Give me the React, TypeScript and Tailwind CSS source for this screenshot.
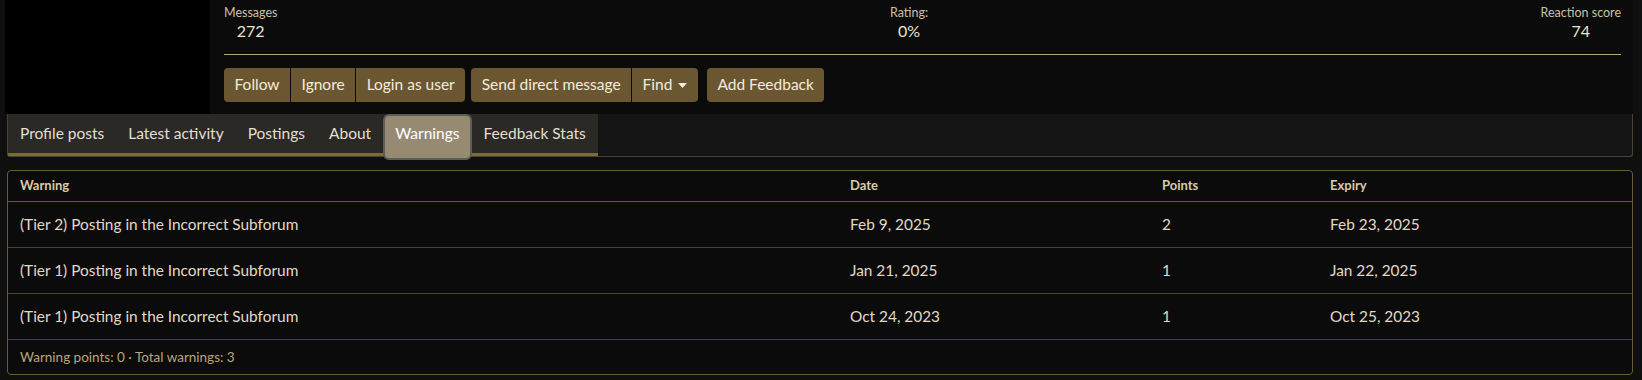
const font = { fontFamily: 'Lato, "Noto Sans", sans-serif' }

const stats = [
  { label: 'Messages', value: '272', align: 'items-start' },
  { label: 'Rating:', value: '0%', align: 'items-center' },
  { label: 'Reaction score', value: '74', align: 'items-end' },
]

const tabs = ['Profile posts', 'Latest activity', 'Postings', 'About', 'Warnings', 'Feedback Stats']

const warnings = [
  { title: '(Tier 2) Posting in the Incorrect Subforum', date: 'Feb 9, 2025', points: '2', expiry: 'Feb 23, 2025' },
  { title: '(Tier 1) Posting in the Incorrect Subforum', date: 'Jan 21, 2025', points: '1', expiry: 'Jan 22, 2025' },
  { title: '(Tier 1) Posting in the Incorrect Subforum', date: 'Oct 24, 2023', points: '1', expiry: 'Oct 25, 2023' },
]

const cols = 'grid grid-cols-[830px_312px_168px_1fr]'

function Btn({ children, className = '' }: { children: React.ReactNode; className?: string }) {
  return (
    <button className={`h-[34px] px-[10.5px] bg-[#6b5632] text-[15.5px] text-[#f3ecdd] flex items-center gap-[6px] ${className}`}>
      {children}
    </button>
  )
}

export default function App() {
  return (
    <div className="min-h-[380px] w-[1642px] bg-[#0f0f0f] pl-[5px] pr-[9px]" style={font}>
      {/* member header */}
      <div className="flex bg-[#0b0b0b] h-[114px]">
        <div className="w-[205px] h-[114px] bg-black flex-shrink-0" />
        <div className="flex-1 pl-[14px] pr-[12px] pt-[5px]">
          <div className="flex justify-between">
            {stats.map((s) => (
              <div key={s.label} className={`flex flex-col ${s.align}`}>
                <div className="flex flex-col items-center">
                  <span className="text-[12.5px] leading-[16px] text-[#c9c0a6]">{s.label}</span>
                  <span className="text-[16px] leading-[20px] text-[#ebe3cf]">{s.value}</span>
                </div>
              </div>
            ))}
          </div>
          <div className="mt-[13px] h-px bg-[#b9a77c]" />
          <div className="mt-[13px] flex gap-[6px]">
            <div className="flex gap-px">
              <Btn className="rounded-l-[4px]">Follow</Btn>
              <Btn>Ignore</Btn>
              <Btn className="rounded-r-[4px]">Login as user</Btn>
            </div>
            <div className="flex gap-px">
              <Btn className="rounded-l-[4px]">Send direct message</Btn>
              <Btn className="rounded-r-[4px]">
                Find
                <svg width="9" height="6" viewBox="0 0 9 6" className="mt-[2px]">
                  <polygon points="0,0 9,0 4.5,5" fill="#f3ecdd" />
                </svg>
              </Btn>
            </div>
            <Btn className="rounded-[4px] ml-[3px]">Add Feedback</Btn>
          </div>
        </div>
      </div>

      {/* tabs */}
      <div className="ml-[2px] h-[43px] bg-[#141414] border-x border-b border-[#4a4230] rounded-b-[3px]">
        <div className="inline-flex h-[42px] bg-[#2a2926] border-b-[3px] border-[#7d6a3a]">
          {tabs.map((t) =>
            t === 'Warnings' ? (
              <div
                key={t}
                className="relative z-10 self-start h-[46px] px-[10px] pb-[7px] flex items-center rounded-[6px] border-2 border-[#5e5c57] bg-[#978a72] text-[15.5px] text-white"
              >
                {t}
              </div>
            ) : (
              <div key={t} className="px-3 flex items-center text-[15.5px] text-[#e3dfd4]">
                {t}
              </div>
            ),
          )}
        </div>
      </div>

      {/* warnings table */}
      <div className="ml-[2px] mt-[13px] border border-[#6b5a32] rounded-[4px] bg-[#0b0b0b]">
        <div className={`${cols} h-[31px] items-center border-b border-[#6b5a33] text-[13px] font-bold text-[#d9cba6]`}>
          <div className="pl-3">Warning</div>
          <div className="pl-3">Date</div>
          <div className="pl-3">Points</div>
          <div className="pl-3">Expiry</div>
        </div>
        {warnings.map((w, i) => (
          <div key={i} className={`${cols} h-[46px] items-center border-b border-[#4d4328] text-[15.4px] text-[#e2d9c5]`}>
            <div className="pl-3">{w.title}</div>
            <div className="pl-3">{w.date}</div>
            <div className="pl-3">{w.points}</div>
            <div className="pl-3">{w.expiry}</div>
          </div>
        ))}
        <div className="h-[34px] flex items-center pl-3 text-[13.5px] text-[#b8a67a]">
          Warning points: 0 · Total warnings: 3
        </div>
      </div>
    </div>
  )
}
